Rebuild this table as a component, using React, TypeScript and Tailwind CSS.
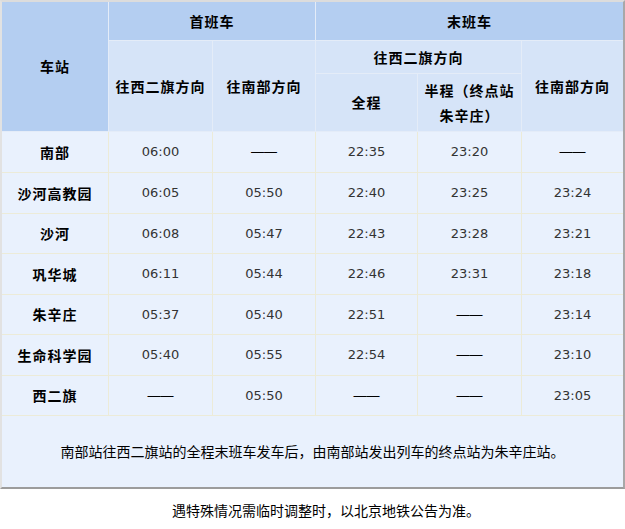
import React from 'react';

const cjk = '"Noto Sans CJK SC", "Noto Sans", sans-serif';

const rows: [string, string, string, string, string, string][] = [
  ['南部', '06:00', '——', '22:35', '23:20', '——'],
  ['沙河高教园', '06:05', '05:50', '22:40', '23:25', '23:24'],
  ['沙河', '06:08', '05:47', '22:43', '23:28', '23:21'],
  ['巩华城', '06:11', '05:44', '22:46', '23:31', '23:18'],
  ['朱辛庄', '05:37', '05:40', '22:51', '——', '23:14'],
  ['生命科学园', '05:40', '05:55', '22:54', '——', '23:10'],
  ['西二旗', '——', '05:50', '——', '——', '23:05'],
];

const head = 'flex items-center justify-center text-center font-bold text-[14px] tracking-[1px] text-black border-r border-b border-[#e4ecf8]';

function Cell({ v, first }: { v: string; first: boolean }) {
  if (first) return <span className="font-bold text-[14px] tracking-[1px] text-black">{v}</span>;
  if (v === '——')
    return (
      <span className="text-[13px] text-black" style={{ fontFamily: '"Liberation Sans", sans-serif' }}>
        {v}
      </span>
    );
  return (
    <span className="text-[13px] text-[#333]" style={{ fontFamily: '"DejaVu Sans", sans-serif' }}>
      {v}
    </span>
  );
}

export default function App() {
  return (
    <div className="w-[625px] h-[529px] bg-white" style={{ fontFamily: cjk }}>
      <div className="border-t-2 border-l-2 border-t-[#dcdcdc] border-l-[#e2e2e2] border-r-2 border-b-2 border-r-[#a8a8a8] border-b-[#9c9c9c]">
        <div className="grid grid-cols-[107px_104px_103px_102px_104px_101px] grid-rows-[39px_33px_58px_41px_41px_40px_41px_40px_41px_40px_71px]">
          {/* header */}
          <div className={`${head} row-span-3 bg-[#b4cef1]`}>车站</div>
          <div className={`${head} col-span-2 bg-[#b4cef1]`}>首班车</div>
          <div className={`${head} col-span-3 bg-[#b4cef1] border-r-0`}>末班车</div>
          <div className={`${head} row-span-2 bg-[#d6e4f8]`}>往西二旗方向</div>
          <div className={`${head} row-span-2 bg-[#d6e4f8]`}>往南部方向</div>
          <div className={`${head} col-span-2 bg-[#d6e4f8]`}>往西二旗方向</div>
          <div className={`${head} row-span-2 bg-[#d6e4f8] border-r-0`}>往南部方向</div>
          <div className={`${head} bg-[#d6e4f8]`}>全程</div>
          <div className={`${head} bg-[#d6e4f8] leading-[25px]`}>
            半程（终点站
            <br />
            朱辛庄）
          </div>

          {/* body */}
          {rows.map((r) =>
            r.map((v, i) => (
              <div
                key={r[0] + i}
                className={`flex items-center justify-center bg-[#e9f1fd] border-b border-[#ecebd8] ${i < 5 ? 'border-r' : ''}`}
              >
                <Cell v={v} first={i === 0} />
              </div>
            ))
          )}

          {/* note */}
          <div className="col-span-6 flex items-center justify-center bg-[#e9f1fd] text-[14px] text-black">
            南部站往西二旗站的全程末班车发车后，由南部站发出列车的终点站为朱辛庄站。
          </div>
        </div>
      </div>
      <p className="mt-[11px] pl-[27px] text-center text-[14px] text-black">遇特殊情况需临时调整时，以北京地铁公告为准。</p>
    </div>
  );
}
